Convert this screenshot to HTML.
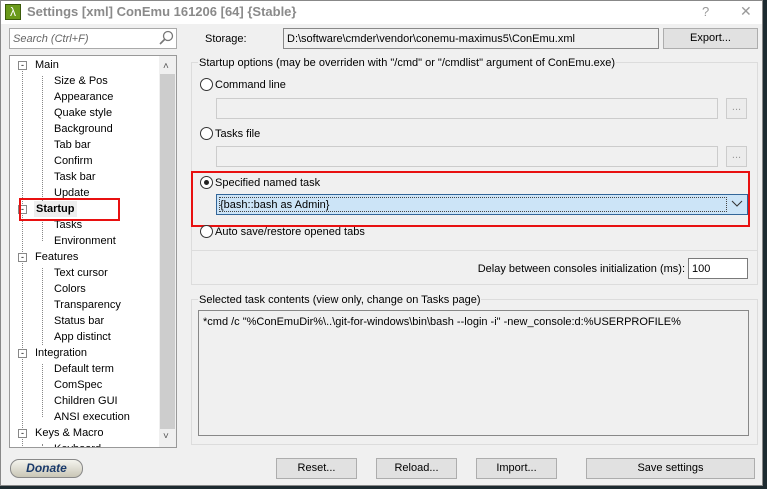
<!DOCTYPE html><html><head><style>
*{margin:0;padding:0;box-sizing:border-box}
body{width:767px;height:489px;background:#1d2b30;font-family:"Liberation Sans",sans-serif;font-size:11px;color:#000;position:relative;overflow:hidden}
.a{position:absolute}
.t{position:absolute;white-space:nowrap;line-height:14px}
.btn{position:absolute;background:#e1e1e1;border:1px solid #adadad;text-align:center;line-height:18px}
.in{position:absolute;background:#fff;border:1px solid #7a7a7a}
.dis{position:absolute;background:#f0f0f0;border:1px solid #ccc}
.rad{position:absolute;width:13px;height:13px;border:1px solid #333;border-radius:50%;background:#fff}
.tv{position:absolute;left:0;font-size:11px;line-height:16px}
</style></head><body>
<div class="a" style="left:0;top:0;width:763px;height:486px;background:#f0f0f0;border:1px solid #888"></div>
<div class="a" style="left:1px;top:1px;width:761px;height:23px;background:#fff"></div>
<div class="a" style="left:5px;top:4px;width:16px;height:16px;background:#6a9a1a;border:1px solid #3a5a0a;color:#fff;font-size:12px;line-height:14px;text-align:center">λ</div>
<div class="t" style="left:27px;top:5px;font-size:13px;font-weight:bold;color:#8a8a8a">Settings [xml] ConEmu 161206 [64] {Stable}</div>
<div class="t" style="left:702px;top:5px;font-size:13px;color:#999">?</div>
<div class="t" style="left:740px;top:4px;font-size:14px;color:#999">✕</div>

<div class="in" style="left:9px;top:28px;width:168px;height:21px;border-color:#aaa"></div>
<div class="t" style="left:13px;top:32px;font-style:italic;color:#666">Search (Ctrl+F)</div>
<svg class="a" style="left:158px;top:30px" width="16" height="16"><circle cx="10" cy="6" r="4.5" fill="none" stroke="#777" stroke-width="1.3"/><path d="M7 9 L2 14" stroke="#777" stroke-width="1.6"/></svg>

<div class="a" style="left:9px;top:55px;width:168px;height:393px;background:#fff;border:1px solid #999;overflow:hidden">
<div class="a" style="left:149px;top:0;width:17px;height:391px;background:#f0f0f0"></div>
<div class="a" style="left:150px;top:18px;width:15px;height:355px;background:#cdcdcd"></div>
<div class="t" style="left:153px;top:4px;font-size:10px;color:#555">˄</div>
<div class="t" style="left:153px;top:374px;font-size:10px;color:#555">˅</div>
<div class="a" style="left:12px;top:12px;height:390px;border-left:1px dotted #888"></div>
<div class="a" style="left:32px;top:20px;height:125px;border-left:1px dotted #888"></div>
<div class="a" style="left:32px;top:164px;height:21px;border-left:1px dotted #888"></div>
<div class="a" style="left:32px;top:212px;height:77px;border-left:1px dotted #888"></div>
<div class="a" style="left:32px;top:308px;height:53px;border-left:1px dotted #888"></div>
<div class="a" style="left:32px;top:388px;height:10px;border-left:1px dotted #888"></div>
<div style="position:absolute;left:0;top:1px;width:150px">
<div class="tv" style="top:0;left:25px">Main</div>
<div class="tv" style="top:16px;left:44px">Size &amp; Pos</div>
<div class="tv" style="top:32px;left:44px">Appearance</div>
<div class="tv" style="top:48px;left:44px">Quake style</div>
<div class="tv" style="top:64px;left:44px">Background</div>
<div class="tv" style="top:80px;left:44px">Tab bar</div>
<div class="tv" style="top:96px;left:44px">Confirm</div>
<div class="tv" style="top:112px;left:44px">Task bar</div>
<div class="tv" style="top:128px;left:44px">Update</div>
<div class="tv" style="top:144px;left:24px;font-weight:bold;background:#eee;padding:0 2px">Startup</div>
<div class="tv" style="top:160px;left:44px">Tasks</div>
<div class="tv" style="top:176px;left:44px">Environment</div>
<div class="tv" style="top:192px;left:25px">Features</div>
<div class="tv" style="top:208px;left:44px">Text cursor</div>
<div class="tv" style="top:224px;left:44px">Colors</div>
<div class="tv" style="top:240px;left:44px">Transparency</div>
<div class="tv" style="top:256px;left:44px">Status bar</div>
<div class="tv" style="top:272px;left:44px">App distinct</div>
<div class="tv" style="top:288px;left:25px">Integration</div>
<div class="tv" style="top:304px;left:44px">Default term</div>
<div class="tv" style="top:320px;left:44px">ComSpec</div>
<div class="tv" style="top:336px;left:44px">Children GUI</div>
<div class="tv" style="top:352px;left:44px">ANSI execution</div>
<div class="tv" style="top:368px;left:25px">Keys &amp; Macro</div>
<div class="tv" style="top:384px;left:44px">Keyboard</div>
</div>
<div class="a" style="left:8px;top:5px;width:9px;height:9px;border:1px solid #888;background:#fff;font-size:9px;line-height:6px;text-align:center">-</div>
<div class="a" style="left:8px;top:149px;width:9px;height:9px;border:1px solid #888;background:#fff;font-size:9px;line-height:6px;text-align:center">-</div>
<div class="a" style="left:8px;top:197px;width:9px;height:9px;border:1px solid #888;background:#fff;font-size:9px;line-height:6px;text-align:center">-</div>
<div class="a" style="left:8px;top:293px;width:9px;height:9px;border:1px solid #888;background:#fff;font-size:9px;line-height:6px;text-align:center">-</div>
<div class="a" style="left:8px;top:373px;width:9px;height:9px;border:1px solid #888;background:#fff;font-size:9px;line-height:6px;text-align:center">-</div>
</div>
<div class="a" style="left:19px;top:198px;width:101px;height:23px;border:2px solid #e81010"></div>

<div class="a" style="left:10px;top:459px;width:73px;height:19px;border-radius:9px;border:1px solid #888;background:linear-gradient(#f4f4ee,#c9c6b6);text-align:center;font-weight:bold;font-style:italic;color:#1a3a6a;line-height:17px;font-size:12px">Donate</div>

<div class="t" style="left:205px;top:32px">Storage:</div>
<div class="dis" style="left:283px;top:28px;width:376px;height:21px;border-color:#888"></div>
<div class="t" style="left:287px;top:32px">D:\software\cmder\vendor\conemu-maximus5\ConEmu.xml</div>
<div class="btn" style="left:663px;top:28px;width:95px;height:21px">Export...</div>

<div class="a" style="left:191px;top:62px;width:567px;height:223px;border:1px solid #dcdcdc"></div>
<div class="a" style="left:191px;top:250px;width:567px;border-top:1px solid #dcdcdc"></div>
<div class="t" style="left:198px;top:56px;background:#f0f0f0;padding:0 1px">Startup options (may be overriden with "/cmd" or "/cmdlist" argument of ConEmu.exe)</div>
<div class="rad" style="left:200px;top:78px"></div><div class="t" style="left:215px;top:78px">Command line</div>
<div class="dis" style="left:216px;top:98px;width:502px;height:21px"></div>
<div class="dis" style="left:726px;top:98px;width:21px;height:21px;background:#ececec;color:#999;text-align:center;line-height:17px">...</div>
<div class="rad" style="left:200px;top:127px"></div><div class="t" style="left:215px;top:127px">Tasks file</div>
<div class="dis" style="left:216px;top:146px;width:502px;height:21px"></div>
<div class="dis" style="left:726px;top:146px;width:21px;height:21px;background:#ececec;color:#999;text-align:center;line-height:17px">...</div>
<div class="rad" style="left:200px;top:176px"></div><div class="a" style="left:204px;top:180px;width:5px;height:5px;border-radius:50%;background:#222"></div>
<div class="t" style="left:215px;top:176px">Specified named task</div>
<div class="a" style="left:216px;top:194px;width:532px;height:21px;background:#cce4f7;border:1px solid #336699"></div>
<div class="a" style="left:219px;top:197px;width:508px;height:15px;border:1px dotted #444"></div>
<div class="t" style="left:220px;top:198px">{bash::bash as Admin}</div>
<svg class="a" style="left:731px;top:200px" width="12" height="8"><path d="M1 1 L6 6 L11 1" fill="none" stroke="#333"/></svg>
<div class="a" style="left:191px;top:171px;width:559px;height:56px;border:2px solid #e81010"></div>
<div class="rad" style="left:200px;top:225px"></div><div class="t" style="left:215px;top:225px">Auto save/restore opened tabs</div>
<div class="t" style="right:82px;top:262px">Delay between consoles initialization (ms):</div>
<div class="in" style="left:688px;top:258px;width:60px;height:21px"></div>
<div class="t" style="left:692px;top:262px">100</div>

<div class="a" style="left:191px;top:299px;width:567px;height:146px;border:1px solid #dcdcdc"></div>
<div class="t" style="left:198px;top:293px;background:#f0f0f0;padding:0 1px">Selected task contents (view only, change on Tasks page)</div>
<div class="dis" style="left:198px;top:310px;width:551px;height:126px;border-color:#888"></div>
<div class="a" style="left:730px;top:311px;width:18px;height:124px;background:#f0f0f0"></div>
<div class="t" style="left:203px;top:315px">*cmd /c "%ConEmuDir%\..\git-for-windows\bin\bash --login -i" -new_console:d:%USERPROFILE%</div>

<div class="btn" style="left:276px;top:458px;width:81px;height:21px">Reset...</div>
<div class="btn" style="left:376px;top:458px;width:81px;height:21px">Reload...</div>
<div class="btn" style="left:476px;top:458px;width:81px;height:21px">Import...</div>
<div class="btn" style="left:586px;top:458px;width:169px;height:21px">Save settings</div>
</body></html>
